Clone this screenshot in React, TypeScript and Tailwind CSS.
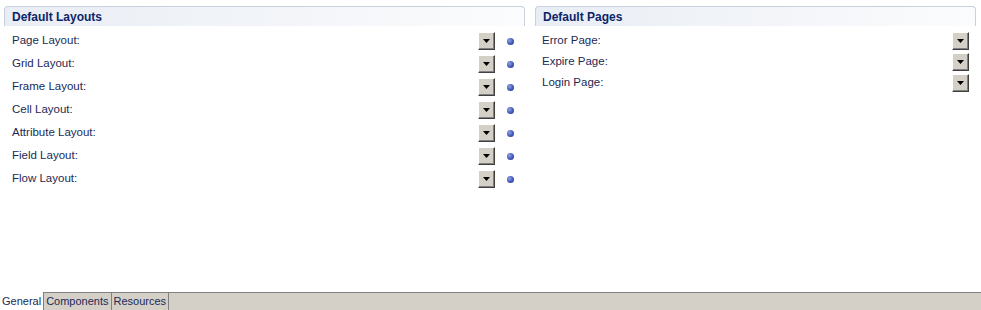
import React from "react";

const layouts = [
  "Page Layout:",
  "Grid Layout:",
  "Frame Layout:",
  "Cell Layout:",
  "Attribute Layout:",
  "Field Layout:",
  "Flow Layout:",
];

const pages = ["Error Page:", "Expire Page:", "Login Page:"];

function DropButton() {
  return (
    <div className="w-[17px] h-[18px] bg-[#d4d0c8] border-t border-l border-t-white border-l-white border-r border-b border-r-[#404040] border-b-[#404040] flex items-center justify-center shadow-[inset_-1px_-1px_0_#808080]">
      <svg width="7" height="4" viewBox="0 0 7 4">
        <polygon points="0,0 7,0 3.5,4" fill="#000" />
      </svg>
    </div>
  );
}

function Dot() {
  return (
    <div className="w-[7px] h-[7px] rounded-full bg-[radial-gradient(circle_at_35%_35%,#8da0e8,#3d52b0_60%,#26368a)]" />
  );
}

function SectionHeader({ title }: { title: string }) {
  return (
    <div className="h-[20px] rounded-t-[4px] border-t border-x border-[#c9d1de] bg-gradient-to-r from-[#e9edf4] to-[#fbfcfd] flex items-center px-[7px]">
      <span className="text-[12px] font-bold text-[#0b2569]">{title}</span>
    </div>
  );
}

export default function App() {
  return (
    <div
      className="w-[981px] h-[310px] bg-white flex flex-col overflow-hidden"
      style={{ fontFamily: '"Liberation Sans", Arial, sans-serif' }}
    >
      <div className="flex-1 flex pt-[6px] pl-[4px] gap-[10px]">
        {/* Default Layouts */}
        <section className="w-[521px] flex flex-col">
          <SectionHeader title="Default Layouts" />
          <div className="flex flex-col pt-[3px]">
            {layouts.map((l) => (
              <div key={l} className="h-[23px] flex items-center pl-[8px]">
                <span className="flex-1 text-[11.5px] text-[#1b2a55]">{l}</span>
                <DropButton />
                <div className="w-[30px] flex justify-center pt-[2px]">
                  <Dot />
                </div>
              </div>
            ))}
          </div>
        </section>

        {/* Default Pages */}
        <section className="w-[441px] flex flex-col">
          <SectionHeader title="Default Pages" />
          <div className="flex flex-col pt-[4px]">
            {pages.map((p) => (
              <div key={p} className="h-[21px] flex items-center pl-[7px] pr-[7px]">
                <span className="flex-1 text-[11.5px] text-[#1b2a55]">{p}</span>
                <DropButton />
              </div>
            ))}
          </div>
        </section>
      </div>

      {/* Tab bar */}
      <div className="h-[18px] bg-[#d4d0c8] border-t border-[#808080] flex items-start">
        <div className="h-[18px] px-[2px] bg-white border-r border-[#808080] -mt-px flex items-center text-[11px] text-[#1b2a55]">
          General
        </div>
        <div className="h-[17px] px-[2px] border-r border-[#808080] flex items-center text-[11px] text-[#1b2a55]">
          Components
        </div>
        <div className="h-[17px] px-[2px] border-r border-[#808080] flex items-center text-[11px] text-[#1b2a55]">
          Resources
        </div>
      </div>
    </div>
  );
}
